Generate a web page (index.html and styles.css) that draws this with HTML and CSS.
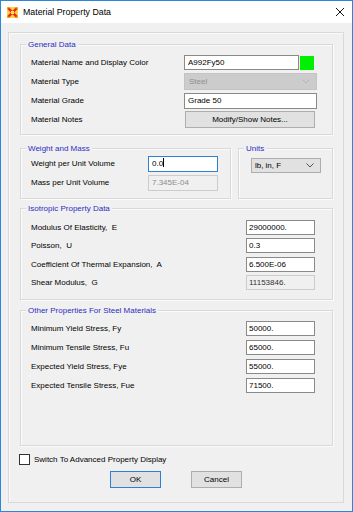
FILE: index.html
```html
<!DOCTYPE html>
<html lang="en">
<head>
    <meta charset="UTF-8">
    <meta name="viewport" content="width=device-width, initial-scale=1.0">
    <title>Material Property Data</title>
    <link rel="stylesheet" href="styles.css">
</head>
<body>
    <div class="window">
        <div class="titlebar">
            <svg class="app-icon" width="11" height="11" viewBox="0 0 11 11">
                <rect x="0" y="0" width="11" height="11" fill="#ffd24d"/>
                <path d="M0.5 0.5 L10.5 10.5 M10.5 0.5 L0.5 10.5" stroke="#f7941d" stroke-width="3"/>
                <path d="M1.5 1.5 L9.5 9.5 M9.5 1.5 L1.5 9.5" stroke="#e8201c" stroke-width="1.8"/>
                <rect x="4" y="4" width="3" height="3" fill="#ffe14d"/>
            </svg>
            <span class="title">Material Property Data</span>
            <svg class="close" width="8" height="8" viewBox="0 0 8 8">
                <path d="M0 0 L8 8 M8 0 L0 8" stroke="#111" stroke-width="1"/>
            </svg>
        </div>

        <div class="client">
            <div class="frame">
                <!-- General Data -->
                <div class="group group-general">
                    <div class="group-title">General Data</div>
                    <div class="rows">
                        <div class="row">
                            <span class="label">Material Name and Display Color</span>
                            <div class="field field-name">A992Fy50</div>
                            <span class="swatch"></span>
                        </div>
                        <div class="row">
                            <span class="label">Material Type</span>
                            <div class="combo combo-disabled">
                                <span>Steel</span>
                                <svg class="chevron" width="8" height="5" viewBox="0 0 8 5"><path d="M0.5 0.5 L4 4 L7.5 0.5" fill="none" stroke="#b5b5b5" stroke-width="1"/></svg>
                            </div>
                        </div>
                        <div class="row">
                            <span class="label">Material Grade</span>
                            <div class="field field-grade">Grade 50</div>
                        </div>
                        <div class="row">
                            <span class="label">Material Notes</span>
                            <button class="btn btn-notes">Modify/Show Notes...</button>
                        </div>
                    </div>
                </div>

                <div class="middle">
                    <!-- Weight and Mass -->
                    <div class="group group-weight">
                        <div class="group-title">Weight and Mass</div>
                        <div class="rows">
                            <div class="row">
                                <span class="label">Weight per Unit Volume</span>
                                <div class="field field-small field-focus">0.0<span class="caret"></span></div>
                            </div>
                            <div class="row">
                                <span class="label">Mass per Unit Volume</span>
                                <div class="field field-small field-disabled">7.345E-04</div>
                            </div>
                        </div>
                    </div>
                    <!-- Units -->
                    <div class="group group-units">
                        <div class="group-title">Units</div>
                        <div class="combo combo-units">
                            <span>lb, in, F</span>
                            <svg class="chevron" width="8" height="5" viewBox="0 0 8 5"><path d="M0.5 0.5 L4 4 L7.5 0.5" fill="none" stroke="#555" stroke-width="1"/></svg>
                        </div>
                    </div>
                </div>

                <!-- Isotropic Property Data -->
                <div class="group group-iso">
                    <div class="group-title">Isotropic Property Data</div>
                    <div class="rows">
                        <div class="row">
                            <span class="label">Modulus Of Elasticity,&nbsp; E</span>
                            <div class="field field-value">29000000.</div>
                        </div>
                        <div class="row">
                            <span class="label">Poisson,&nbsp; U</span>
                            <div class="field field-value">0.3</div>
                        </div>
                        <div class="row">
                            <span class="label">Coefficient Of Thermal Expansion,&nbsp; A</span>
                            <div class="field field-value">6.500E-06</div>
                        </div>
                        <div class="row">
                            <span class="label">Shear Modulus,&nbsp; G</span>
                            <div class="field field-value field-readonly">11153846.</div>
                        </div>
                    </div>
                </div>

                <!-- Other Properties -->
                <div class="group group-other">
                    <div class="group-title">Other Properties For Steel Materials</div>
                    <div class="rows">
                        <div class="row">
                            <span class="label">Minimum Yield Stress, Fy</span>
                            <div class="field field-value">50000.</div>
                        </div>
                        <div class="row">
                            <span class="label">Minimum Tensile Stress, Fu</span>
                            <div class="field field-value">65000.</div>
                        </div>
                        <div class="row">
                            <span class="label">Expected Yield Stress, Fye</span>
                            <div class="field field-value">55000.</div>
                        </div>
                        <div class="row">
                            <span class="label">Expected Tensile Stress, Fue</span>
                            <div class="field field-value">71500.</div>
                        </div>
                    </div>
                </div>

                <label class="check-row">
                    <span class="checkbox"></span>
                    <span>Switch To Advanced Property Display</span>
                </label>

                <div class="buttons">
                    <button class="btn btn-dialog btn-default">OK</button>
                    <button class="btn btn-dialog">Cancel</button>
                </div>
            </div>
        </div>
    </div>
</body>
</html>
```

FILE: styles.css
```css
* {
    margin: 0;
    padding: 0;
    box-sizing: border-box;
}

body {
    font-family: 'Liberation Sans', Arial, sans-serif;
    font-size: 8px;
    color: #000;
    background: #ffffff;
}

.window {
    width: 353px;
    height: 512px;
    border: 1px solid #2d86dc;
    background: #f0f0f0;
    display: flex;
    flex-direction: column;
}

/* title bar */
.titlebar {
    height: 22px;
    background: #ffffff;
    display: flex;
    align-items: center;
    padding-left: 6px;
}

.app-icon {
    margin-right: 5px;
    flex-shrink: 0;
}

.title {
    font-size: 8.8px;
    color: #000;
}

.close {
    margin-left: auto;
    margin-right: 8px;
}

/* client area */
.client {
    flex: 1;
    padding: 9px 8px 8px 7px;
}

.frame {
    height: 471px;
    border: 1px solid #d9d9d9;
    box-shadow: inset 1px 1px 0 #fbfbfb;
    padding: 11px 10px 0 11px;
    display: flex;
    flex-direction: column;
}

/* group boxes */
.group {
    border: 1px solid #d9d9d9;
    box-shadow: inset 1px 1px 0 #fbfbfb, 1px 1px 0 #fbfbfb;
}

.group-title {
    width: fit-content;
    margin: -6px 0 0 5px;
    padding: 0 2px;
    line-height: 11px;
    height: 11px;
    background: #f0f0f0;
    color: #2e2ec0;
}

.rows {
    padding-left: 10px;
}

.row {
    display: flex;
    align-items: center;
    height: 19px;
}

.label {
    flex-shrink: 0;
    white-space: nowrap;
}

.group-general {
    height: 91px;
    width: 313px;
}

.group-general .rows {
    margin-top: 3px;
}

.group-general .label {
    width: 153px;
}

.middle {
    display: flex;
    gap: 7px;
    margin-top: 13px;
    height: 51px;
}

.group-weight {
    width: 213px;
}

.group-weight .label {
    width: 117px;
}

.group-units {
    width: 96px;
}

.group-iso {
    margin-top: 9px;
    height: 92px;
    width: 313px;
}

.group-iso .rows {
    margin-top: 4px;
}

.group-iso .row {
    height: 18.5px;
}

.group-iso .label,
.group-other .label {
    width: 215px;
}

.group-other {
    margin-top: 10px;
    height: 136px;
    width: 313px;
}

.group-other .rows {
    margin-top: 3px;
}

/* inputs */
.field {
    height: 15px;
    background: #ffffff;
    border: 1px solid #8a8a8a;
    padding-left: 3px;
    line-height: 13px;
    white-space: nowrap;
    color: #000;
}

.field-name {
    width: 115px;
}

.field-grade {
    width: 133px;
    height: 16px;
    line-height: 14px;
}

.field-small {
    width: 70px;
    height: 16px;
    line-height: 14px;
}

.field-focus {
    border-color: #2f7fd2;
}

.caret {
    display: inline-block;
    width: 1px;
    height: 9px;
    background: #000;
    vertical-align: -1px;
}

.field-disabled {
    background: #f0f0f0;
    border-color: #cccccc;
    color: #8c8c8c;
}

.field-value {
    width: 69px;
    padding-left: 2px;
}

.field-readonly {
    background: #f0f0f0;
    border-color: #cccccc;
    color: #333;
}

.swatch {
    width: 14px;
    height: 14px;
    margin-left: 1px;
    background: #00f000;
}

/* combo boxes */
.combo {
    display: flex;
    align-items: center;
    justify-content: space-between;
    padding: 0 6px 0 3px;
}

.combo-disabled {
    width: 133px;
    height: 17px;
    background: #cccccc;
    border: 1px solid #c4c4c4;
    color: #8e8e8e;
    padding-left: 4px;
}

.combo-units {
    width: 70px;
    height: 15px;
    margin: 4px 0 0 12px;
    background: #e1e1e1;
    border: 1px solid #adadad;
    color: #000;
}

/* buttons */
.btn {
    font-family: 'Liberation Sans', Arial, sans-serif;
    font-size: 8px;
    color: #000;
    background: #e1e1e1;
    border: 1px solid #adadad;
    cursor: pointer;
}

.btn-notes {
    width: 130px;
    height: 17px;
    margin-left: 1px;
}

.check-row {
    display: flex;
    align-items: center;
    gap: 4px;
    height: 14px;
    margin-top: 6px;
}

.checkbox {
    width: 11px;
    height: 11px;
    background: #fff;
    border: 1px solid #333;
    margin-left: -1px;
}

.buttons {
    display: flex;
    justify-content: center;
    gap: 30px;
    margin-top: 5px;
    padding-right: 1px;
}

.btn-dialog {
    width: 51px;
    height: 17px;
}

.btn-default {
    border-color: #2f7fd2;
}
```
